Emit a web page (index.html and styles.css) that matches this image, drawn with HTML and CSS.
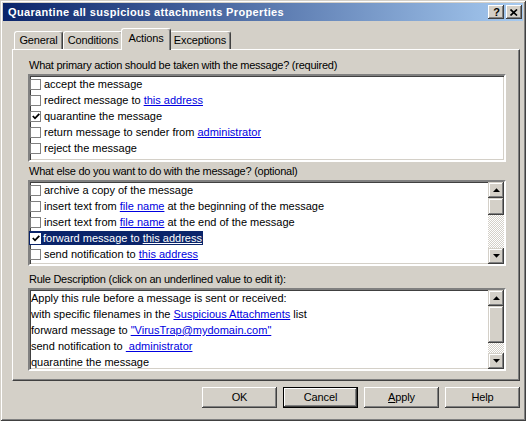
FILE: index.html
```html
<!DOCTYPE html>
<html>
<head>
<meta charset="utf-8">
<title>Properties</title>
<link rel="stylesheet" href="styles.css">
</head>
<body>
<div class="window">
  <div class="titlebar">
    <span class="title">Quarantine all suspicious attachments Properties</span>
    <div class="tbtns">
      <span class="tbtn help">?</span>
      <span class="tbtn close"><svg width="8" height="7" viewBox="0 0 8 7"><path d="M0.5 0.5 L7 6.5 M7 0.5 L0.5 6.5" stroke="#000" stroke-width="1.7"/></svg></span>
    </div>
  </div>
  <div class="dlg">
    <div class="tabs">
      <div class="tab w-general">General</div>
      <div class="tab w-cond">Conditions</div>
      <div class="tab active w-act">Actions</div>
      <div class="tab w-exc">Exceptions</div>
    </div>
    <div class="panel">
      <div class="label">What primary action should be taken with the message? (required)</div>
      <div class="listbox lb1">
        <div class="items">
          <div class="row"><span class="cb"></span><span class="txt">accept the message</span></div>
          <div class="row"><span class="cb"></span><span class="txt">redirect message to <a class="lnk">this address</a></span></div>
          <div class="row"><span class="cb"><svg width="8" height="7" viewBox="0 0 8 7"><path d="M0.8 3 L3 5.3 L7.3 0.8" fill="none" stroke="#000" stroke-width="1.8"/></svg></span><span class="txt">quarantine the message</span></div>
          <div class="row"><span class="cb"></span><span class="txt">return message to sender from <a class="lnk">administrator</a></span></div>
          <div class="row"><span class="cb"></span><span class="txt">reject the message</span></div>
        </div>
      </div>
      <div class="label gap">What else do you want to do with the message? (optional)</div>
      <div class="listbox lb2">
        <div class="items">
          <div class="row"><span class="cb"></span><span class="txt">archive a copy of the message</span></div>
          <div class="row"><span class="cb"></span><span class="txt">insert text from <a class="lnk">file name</a> at the beginning of the message</span></div>
          <div class="row"><span class="cb"></span><span class="txt">insert text from <a class="lnk">file name</a> at the end of the message</span></div>
          <div class="row"><span class="sel"><span class="cb"><svg width="8" height="7" viewBox="0 0 8 7"><path d="M0.8 3 L3 5.3 L7.3 0.8" fill="none" stroke="#000" stroke-width="1.8"/></svg></span><span class="txt">forward message to <u>this address</u></span></span></div>
          <div class="row"><span class="cb"></span><span class="txt">send notification to <a class="lnk">this address</a></span></div>
        </div>
        <div class="vscroll">
          <div class="sbtn"><svg width="7" height="4" viewBox="0 0 7 4"><polygon points="0,4 7,4 3.5,0.3" fill="#000"/></svg></div>
          <div class="thumb t2"></div>
          <div class="track"></div>
          <div class="sbtn"><svg width="7" height="4" viewBox="0 0 7 4"><polygon points="0,0 7,0 3.5,3.7" fill="#000"/></svg></div>
        </div>
      </div>
      <div class="label gap2">Rule Description (click on an underlined value to edit it):</div>
      <div class="listbox lb3">
        <div class="desc">
          <div class="dline">Apply this rule before a message is sent or received:</div>
          <div class="dline">with specific filenames in the <a class="lnk">Suspicious Attachments</a> list</div>
          <div class="dline">forward message to <a class="lnk">"VirusTrap@mydomain.com"</a></div>
          <div class="dline">send notification to <a class="lnk">&nbsp;administrator</a></div>
          <div class="dline">quarantine the message</div>
        </div>
        <div class="vscroll">
          <div class="sbtn"><svg width="7" height="4" viewBox="0 0 7 4"><polygon points="0,4 7,4 3.5,0.3" fill="#000"/></svg></div>
          <div class="thumb t3"></div>
          <div class="track"></div>
          <div class="sbtn"><svg width="7" height="4" viewBox="0 0 7 4"><polygon points="0,0 7,0 3.5,3.7" fill="#000"/></svg></div>
        </div>
      </div>
    </div>
    <div class="buttons">
      <div class="btn">OK</div>
      <div class="btn default">Cancel</div>
      <div class="btn"><u>A</u>pply</div>
      <div class="btn">Help</div>
    </div>
  </div>
</div>
</body>
</html>
```

FILE: styles.css
```css
html, body {
  margin: 0;
  padding: 0;
  background: #D4D0C8;
}
body {
  width: 526px;
  height: 421px;
  overflow: hidden;
  font-family: "Liberation Sans", Arial, sans-serif;
  font-size: 11px;
  color: #000;
}
.window {
  box-sizing: border-box;
  width: 526px;
  height: 421px;
  padding: 3px;
  background: #D4D0C8;
  box-shadow: inset 1px 1px 0 #D4D0C8, inset -1px -1px 0 #404040, inset 2px 2px 0 #fff, inset -2px -2px 0 #808080;
}
.titlebar {
  height: 18px;
  display: flex;
  align-items: center;
  justify-content: space-between;
  background: linear-gradient(to right, #0A246A, #A6CAF0);
  padding: 0 1px 0 5px;
}
.title {
  color: #fff;
  font-weight: bold;
  font-size: 11px;
  letter-spacing: 0.35px;
}
.tbtns {
  display: flex;
  gap: 2px;
}
.tbtn {
  box-sizing: border-box;
  width: 16px;
  height: 14px;
  background: #D4D0C8;
  display: flex;
  align-items: center;
  justify-content: center;
  box-shadow: inset -1px -1px 0 #404040, inset 1px 1px 0 #fff, inset -2px -2px 0 #808080;
}
.tbtn.help {
  font-weight: bold;
  font-size: 11px;
  line-height: 14px;
  padding-left: 1px;
}
.dlg {
  padding: 7px 3px 0 9px;
}
.tabs {
  display: flex;
  align-items: flex-end;
  height: 21px;
  padding-left: 2px;
  position: relative;
  z-index: 1;
}
.tab {
  box-sizing: border-box;
  height: 18px;
  padding-top: 2px;
  line-height: 13px;
  text-align: center;
  letter-spacing: -0.15px;
  background: #D4D0C8;
  border-top: 1px solid #fff;
  border-left: 1px solid #fff;
  border-right: 1px solid #404040;
  box-shadow: inset -1px 0 0 #808080;
  border-radius: 3px 3px 0 0;
}
.w-general { width: 49px; }
.w-cond { width: 60px; }
.w-act { width: 46px; }
.w-exc { width: 62px; }
.tab.active {
  height: 22px;
  width: 50px;
  margin: 0 -2px -1px -2px;
  padding-top: 3px;
  position: relative;
  z-index: 2;
}
.panel {
  box-sizing: border-box;
  height: 332px;
  border-top: 1px solid #fff;
  border-left: 1px solid #fff;
  border-right: 1px solid #404040;
  border-bottom: 1px solid #404040;
  box-shadow: inset -1px -1px 0 #808080;
  padding: 9px 13px 0 15px;
}
.label {
  line-height: 13px;
  height: 13px;
  padding-left: 1px;
  margin-bottom: 2px;
  white-space: nowrap;
  letter-spacing: -0.25px;
}
.label.gap { margin-top: 3px; }
.label.gap2 { margin-top: 7px; }
.listbox {
  box-sizing: border-box;
  background: #fff;
  border: 2px solid;
  border-color: #808080 #fff #fff #808080;
  box-shadow: inset 1px 1px 0 #404040, inset -1px -1px 0 #D4D0C8;
  display: flex;
}
.lb1 { height: 88px; }
.lb2 { height: 86px; }
.lb3 { height: 83px; }
.items {
  flex: 1;
}
.row {
  height: 16px;
  display: flex;
  align-items: center;
  white-space: nowrap;
}
.cb {
  box-sizing: border-box;
  width: 11px;
  height: 11px;
  border: 1px solid #808080;
  background: #fff;
  display: flex;
  align-items: center;
  justify-content: center;
  flex: none;
}
.txt {
  margin-left: 3px;
  line-height: 13px;
}
.sel {
  display: flex;
  align-items: center;
  height: 14px;
  background: #0A246A;
  color: #fff;
  padding: 0 1px 0 0;
  margin-left: -1px;
}
.sel .cb {
  margin-left: 1px;
  border-color: #fff;
}
.sel .txt { margin-left: 2px; }
.lnk {
  color: #0000e0;
  text-decoration: underline;
}
.vscroll {
  width: 16px;
  display: flex;
  flex-direction: column;
  flex: none;
}
.sbtn {
  box-sizing: border-box;
  width: 16px;
  height: 16px;
  background: #D4D0C8;
  display: flex;
  align-items: center;
  justify-content: center;
  box-shadow: inset -1px -1px 0 #404040, inset 1px 1px 0 #D4D0C8, inset -2px -2px 0 #808080, inset 2px 2px 0 #fff;
  flex: none;
}
.thumb {
  box-sizing: border-box;
  width: 16px;
  background: #D4D0C8;
  box-shadow: inset -1px -1px 0 #404040, inset 1px 1px 0 #D4D0C8, inset -2px -2px 0 #808080, inset 2px 2px 0 #fff;
  flex: none;
}
.thumb.t2 { height: 17px; }
.thumb.t3 { height: 37px; }
.track {
  flex: 1;
  background: repeating-conic-gradient(#fff 0 25%, #D4D0C8 0 50%) 0 0 / 2px 2px;
}
.desc {
  flex: 1;
  padding-left: 1px;
}
.dline {
  height: 16px;
  line-height: 16px;
  white-space: nowrap;
}
.buttons {
  display: flex;
  justify-content: flex-end;
  gap: 6px;
  margin-top: 6px;
}
.btn {
  box-sizing: border-box;
  width: 75px;
  height: 21px;
  line-height: 21px;
  text-align: center;
  letter-spacing: -0.15px;
  background: #D4D0C8;
  box-shadow: inset -1px -1px 0 #404040, inset 1px 1px 0 #fff, inset -2px -2px 0 #808080;
}
.btn.default {
  line-height: 19px;
  border: 1px solid #000;
}
```
